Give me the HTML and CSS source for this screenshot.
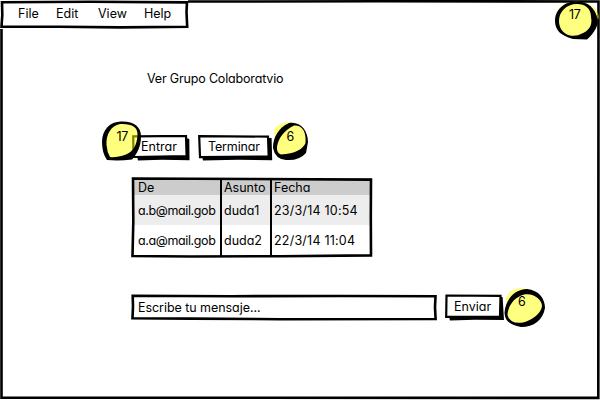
FILE: index.html
```html
<!DOCTYPE html>
<html lang="es">
<head>
<meta charset="utf-8">
<title>Ver Grupo Colaboratvio</title>
<link rel="stylesheet" href="styles.css">
</head>
<body>
<div class="window">
  <svg class="edge frame" viewBox="0 0 600 400"><path d="M1.500 29V397.700L598.300 397.900L598.500 1.500L380 1.300L188 1.500" /></svg>
  <nav class="menu">
    <svg class="edge" viewBox="0 0 189 29"><path d="M2 2.200L90 1.800L187 2.400L186.500 12L187.200 26.700L120 27.400L60 26.800L1.500 26.700L2.300 15Z"/></svg>
    <span class="file">File</span><span class="edit">Edit</span><span class="view">View</span><span class="help">Help</span>
  </nav>
  <main>
    <h1>Ver Grupo Colaboratvio</h1>
    <div class="actions">
      <div class="holder">
        <button class="entrar"><svg class="edge" viewBox="0 0 58 26"><path class="shade" d="M5 21L6 25.400L30 24.800L57.500 25.300L57.300 4L54 3V21Z"/><path class="box" d="M1.200 1.400L54 .9L54.600 21L1.500 22Z"/></svg><span>Entrar</span></button>
        <svg class="badge badge-entrar" viewBox="102 121 40 40"><path class="note" d="M107 127Q114 121 126 122Q140 126 140 138Q139 153 126 155Q115 160 107 157Q100 143 107 127Z"/><path class="ring" fill-rule="evenodd" d="M102 142C102 130 110 121.500 121 121.500C134 121 141 127 141 136C141 147 137 154 132 159.500Q119 161 107 160Q102 153 102 142ZM106.500 145C106 134 111 126 120 124C132 123.500 138 127 137.500 135C137 145 133 152 126 154.500Q116 158 110 157Q107 152 106.500 145Z"/><text x="116.500" y="141">17</text></svg>
      </div>
      <div class="holder">
        <button class="terminar"><svg class="edge" viewBox="0 0 75 26"><path class="shade" d="M4 21L5 25.500L40 24.800L74.200 25.300L73.600 3L70 3V21Z"/><path class="box" d="M1.200 1.200L70 1.600L70.700 21.500L2 22.200Z"/></svg><span>Terminar</span></button>
        <svg class="badge badge-terminar" viewBox="272 121 38 40"><path class="note" d="M274 130Q280 121 291 122Q305 126 307 138Q306 153 289 156Q276 158 275 144Z"/><path class="ring" fill-rule="evenodd" d="M273 148C273 138 278 128 289 123C300 121 308 130 308 142L306 153Q299 161 286 160Q275 159 273 148ZM277 147C278 139 284 130 294 125.500C303 125 306.500 133 305.500 143C303 149 295 154 281 154.500Q276.500 153 277 147Z"/><text x="286.500" y="141">6</text></svg>
      </div>
    </div>
    <div class="table-wrap">
      <table>
        <tr><th>De</th><th>Asunto</th><th>Fecha</th></tr>
        <tr class="alt"><td><span class="mail">a.b@mail.gob</span></td><td>duda1</td><td><span class="date">23/3/14 10:54</span></td></tr>
        <tr><td><span class="mail">a.a@mail.gob</span></td><td>duda2</td><td><span class="date">22/3/14 11:04</span></td></tr>
      </table>
      <svg class="edge" viewBox="0 0 242 81"><path d="M2 1.500L120 2L240 2.600L239.800 40L240 78.400L150 79.200L60 79.500L1.500 79L2.300 45Z"/><path class="divider" d="M90 2V79M140 2V79"/></svg>
    </div>
    <div class="compose">
      <div class="input"><svg class="edge" viewBox="0 0 306 27"><path d="M1.700 1.700L100 2.200L210 2L304.500 2.200L304 13L304.600 25L150 25.200L60 24.600L1.500 24.300L2 12Z"/></svg><span>Escribe tu mensaje...</span></div>
      <div class="holder">
        <button class="enviar"><svg class="edge" viewBox="0 0 60 27"><path class="shade" d="M4 23L5 26.600L30 25.800L59 26.100L57.600 3L55 3V22Z"/><path class="box" d="M1.500 1.500L55.500 1.800L55 22.500L1.200 22.800Z"/></svg><span>Enviar</span></button>
        <svg class="badge badge-enviar" viewBox="504 287 42 40"><path class="note" d="M506 299Q508 289 520 288Q537 289 543 304Q540 321 526 323Q510 325 507 314Z"/><path class="ring" fill-rule="evenodd" d="M504.500 313C505 301 514 289 527 289C539 290 545 299 545 308C543 320 534 327 521 327C510 325 505 321 504.500 313ZM507.500 315C508 305 515 297 524 294.500C533 292.500 542 299 542 306C541 314 532 320 523 322.500Q510 324.500 507.500 315Z"/><text x="518" y="306">6</text></svg>
      </div>
    </div>
  </main>
  <svg class="badge badge-corner" viewBox="554 0 46 41"><path class="note" d="M559 8Q568 0 581 2Q597 5 599 17Q596 31 583 36Q567 40 559 29Q554 17 559 8Z"/><path class="ring" fill-rule="evenodd" d="M555 21C555 10 564 1.500 576 1.500C587 1 595 7 598 20C598 28 592 35 587 39.500L573 39C562 36 555 31 555 21ZM559 21C559 12 566 4 577 4C585 4 591 8 591 17C593 26 588 31 582 33.500Q577 36.500 570 35.500C563 34 559 28 559 21Z"/><text x="569" y="18.500">17</text></svg>
</div>
</body>
</html>
```
FILE: styles.css
```css
* { box-sizing: border-box; }
body {
  margin: 0;
  background: #fff;
  color: #000;
  font: 12.5px/16px Inter, "Liberation Sans", sans-serif;
  font-feature-settings: "cv11" 1;
}
.window { position: relative; width: 600px; height: 400px; overflow: hidden; }
.edge { position: absolute; left: 0; top: 0; width: 100%; height: 100%; fill: none; stroke: #000; stroke-width: 2.6; pointer-events: none; }
.menu { position: relative; width: 189px; height: 29px; padding: 6px 0 0 18px; display: flex; }
.file { width: 38px; }
.edit { width: 42px; }
.view { width: 46px; }
main { padding: 42px 0 0 131px; }
h1 { margin: 0 0 48px 16px; font-size: 12.5px; font-weight: 400; line-height: 16px; letter-spacing: -.17px; }
.actions { display: flex; gap: 8px; height: 42px; }
.holder { position: relative; }
.holder:first-child { margin-left: 1px; }
button { position: relative; display: block; height: 26px; padding: 0 0 0 9px; border: 0; background: none; color: #000; font: inherit; font-feature-settings: inherit; text-align: left; white-space: nowrap; }
button span { position: relative; display: block; line-height: 16px; margin-top: -3px; }
.entrar { width: 58px; }
.terminar { width: 75px; padding-left: 10px; }
.terminar span { letter-spacing: -.15px; }
.enviar { width: 60px; height: 27px; }
.enviar span { margin-top: -2px; }
.shade { fill: #000; stroke: none; }
.box { fill: #fff; stroke-width: 2.2; }
.divider { stroke-width: 2; }
.badge { position: absolute; overflow: visible; }
.badge text { font-size: 12.5px; letter-spacing: -.4px; }
.note { fill: #ff0; fill-opacity: .5; }
.badge-entrar { left: -30px; top: -14px; width: 40px; height: 40px; }
.badge-terminar { left: 74px; top: -14px; width: 38px; height: 40px; }
.badge-enviar { left: 59px; top: -7px; width: 42px; height: 40px; }
.badge-corner { left: 554px; top: 0; width: 46px; height: 41px; }
.table-wrap { position: relative; width: 242px; height: 81px; padding: 1px 2px; }
table { width: 238px; height: 77px; border-collapse: collapse; table-layout: fixed; }
th, td { padding: 1px 0 0 3px; font-weight: 400; text-align: left; white-space: nowrap; }
th { height: 17px; padding-top: 2px; background: #ccc; line-height: 15px; }
th:first-child { width: 88px; }
th:nth-child(2) { width: 50px; }
th:first-child, td:first-child { padding-left: 5px; }
td { height: 30px; padding-top: 2px; }
.mail { letter-spacing: -.38px; }
.date { letter-spacing: .22px; }
.alt { background: #ededed; }
.compose { display: flex; gap: 8px; margin-top: 36px; }
.input { position: relative; width: 306px; height: 27px; padding: 6px 7px 0; letter-spacing: -.05px; }
```
